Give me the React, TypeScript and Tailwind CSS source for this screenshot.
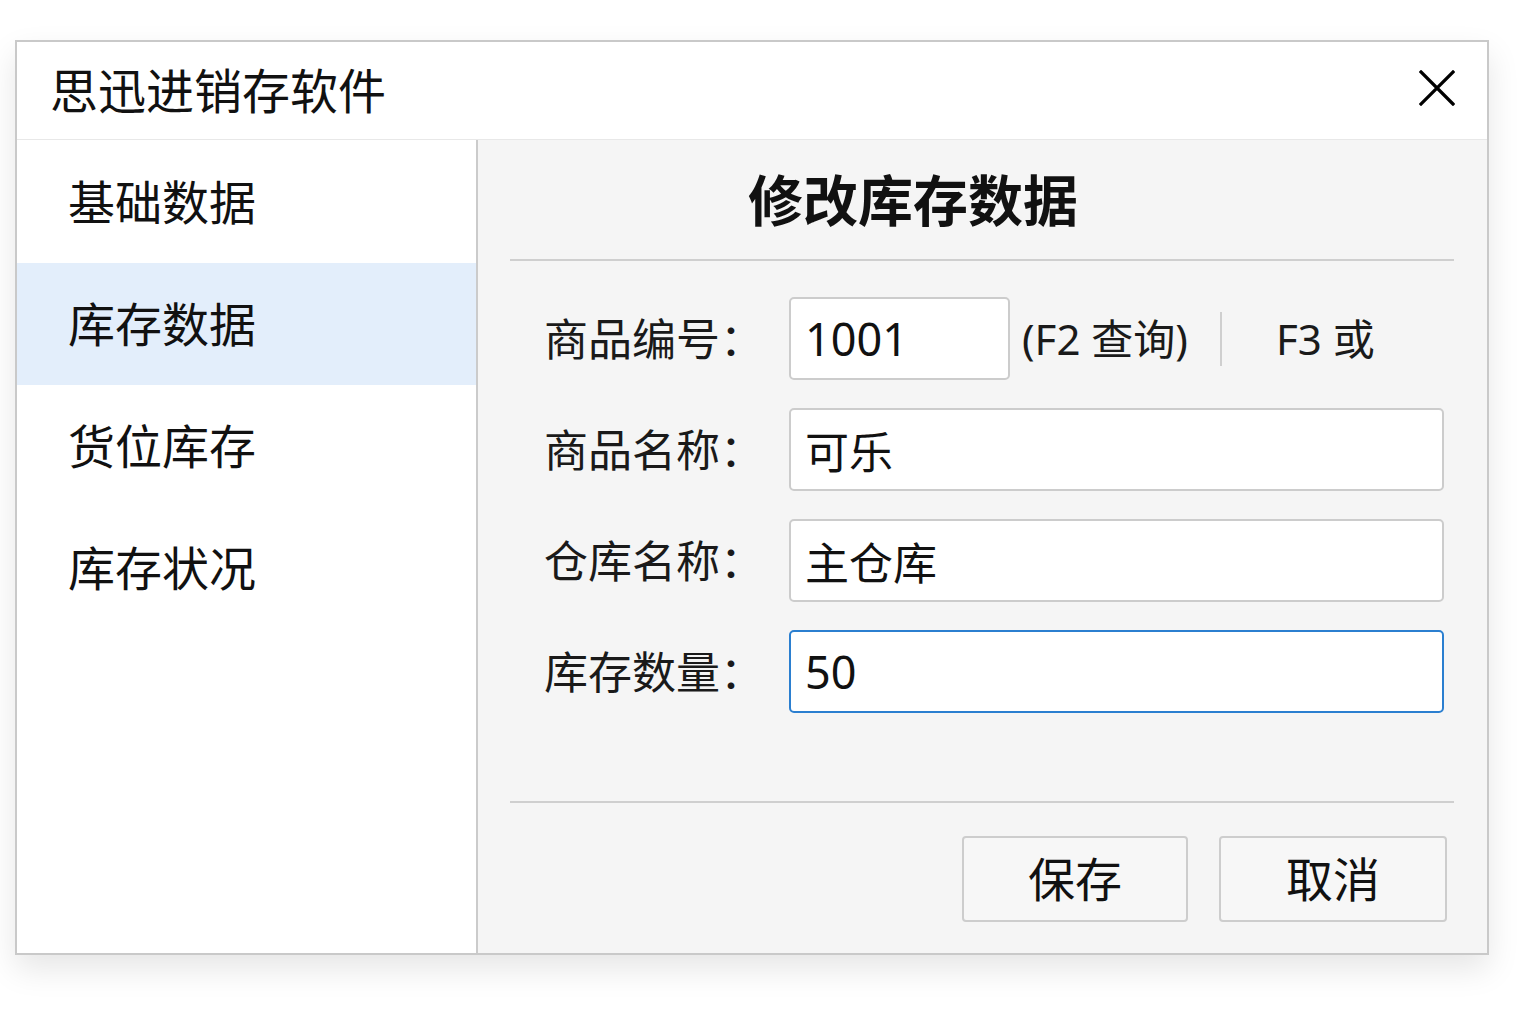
import { useState } from 'react';

const font = { fontFamily: '"Noto Sans", "Noto Sans CJK SC", sans-serif' };

const menuItems = ['基础数据', '库存数据', '货位库存', '库存状况'];

export default function App() {
  const [active, setActive] = useState(1);
  const [code, setCode] = useState('1001');
  const [name, setName] = useState('可乐');
  const [warehouse, setWarehouse] = useState('主仓库');
  const [qty, setQty] = useState('50');

  return (
    <div className="w-[1536px] h-[1024px] bg-white pt-[40px] pl-[15px]" style={font}>
      {/* Window */}
      <div className="w-[1474px] h-[915px] border-2 border-[#c9c9c9] bg-white flex flex-col shadow-[0_14px_30px_rgba(0,0,0,0.10)]">
        {/* Title bar */}
        <div className="h-[98px] flex items-center justify-between border-b border-[#e8e8e8] pl-[33px] pr-[30px]">
          <span className="text-[48px] leading-none text-[#111]">思迅进销存软件</span>
          <button type="button" className="w-[40px] h-[40px] flex items-center justify-center -mt-[5px]">
            <svg width="36" height="36" viewBox="0 0 36 36">
              <path d="M2 2 L34 34 M34 2 L2 34" stroke="#000" strokeWidth="3.2" strokeLinecap="square" />
            </svg>
          </button>
        </div>

        {/* Body */}
        <div className="flex flex-1 min-h-0">
          {/* Sidebar */}
          <div className="w-[461px] shrink-0 border-r-2 border-[#cbcbcb] bg-white pt-[1px]">
            {menuItems.map((item, i) => (
              <div
                key={item}
                onClick={() => setActive(i)}
                className={`h-[122px] flex items-center pl-[51px] text-[47px] leading-none text-[#111] cursor-pointer ${
                  active === i ? 'bg-[#e3eefb]' : ''
                }`}
              >
                {item}
              </div>
            ))}
          </div>

          {/* Content */}
          <div className="flex-1 min-w-0 bg-[#f5f5f5] pl-[32px] pr-[33px] flex flex-col">
            <div className="h-[119px] flex items-center pl-[238px]">
              <h1 className="text-[55px] font-bold leading-none text-[#111]">修改库存数据</h1>
            </div>
            <div className="h-[2px] bg-[#cfcfcf]" />

            <div className="pt-[36px] pl-[34px] pr-[10px] flex flex-col gap-[28px]">
              {/* Row 1 */}
              <div className="flex items-center h-[83px]">
                <label className="w-[245px] shrink-0 text-[44px] leading-none text-[#1a1a1a]">商品编号：</label>
                <input
                  value={code}
                  onChange={(e) => setCode(e.target.value)}
                  className="w-[221px] h-[83px] bg-white border-2 border-[#cccccc] rounded-[5px] pl-[14px] text-[45px] text-[#111] outline-none"
                  style={font}
                />
                <span className="ml-[12px] text-[42px] leading-none text-[#1a1a1a] whitespace-nowrap">(F2 查询)</span>
                <div className="ml-[32px] w-[2px] h-[54px] bg-[#cfcfcf]" />
                <span className="ml-[54px] text-[42px] leading-none text-[#1a1a1a] whitespace-nowrap">F3 或</span>
              </div>

              {/* Row 2 */}
              <div className="flex items-center h-[83px]">
                <label className="w-[245px] shrink-0 text-[44px] leading-none text-[#1a1a1a]">商品名称：</label>
                <input
                  value={name}
                  onChange={(e) => setName(e.target.value)}
                  className="flex-1 min-w-0 h-[83px] bg-white border-2 border-[#cccccc] rounded-[5px] pl-[14px] text-[44px] text-[#111] outline-none"
                  style={font}
                />
              </div>

              {/* Row 3 */}
              <div className="flex items-center h-[83px]">
                <label className="w-[245px] shrink-0 text-[44px] leading-none text-[#1a1a1a]">仓库名称：</label>
                <input
                  value={warehouse}
                  onChange={(e) => setWarehouse(e.target.value)}
                  className="flex-1 min-w-0 h-[83px] bg-white border-2 border-[#cccccc] rounded-[5px] pl-[14px] text-[44px] text-[#111] outline-none"
                  style={font}
                />
              </div>

              {/* Row 4 */}
              <div className="flex items-center h-[83px]">
                <label className="w-[245px] shrink-0 text-[44px] leading-none text-[#1a1a1a]">库存数量：</label>
                <input
                  value={qty}
                  onChange={(e) => setQty(e.target.value)}
                  className="flex-1 min-w-0 h-[83px] bg-white border-2 border-[#2b7fd0] rounded-[5px] pl-[14px] text-[45px] text-[#111] outline-none"
                  style={font}
                />
              </div>
            </div>

            <div className="mt-[88px] h-[2px] bg-[#cfcfcf]" />

            <div className="flex justify-end gap-[31px] pt-[33px] pr-[7px]">
              <button
                type="button"
                className="w-[226px] h-[86px] bg-[#f7f7f7] border-2 border-[#cdcdcd] rounded-[4px] text-[47px] leading-none text-[#111]"
                style={font}
              >
                保存
              </button>
              <button
                type="button"
                className="w-[228px] h-[86px] bg-[#f7f7f7] border-2 border-[#cdcdcd] rounded-[4px] text-[47px] leading-none text-[#111]"
                style={font}
              >
                取消
              </button>
            </div>
          </div>
        </div>
      </div>
    </div>
  );
}
